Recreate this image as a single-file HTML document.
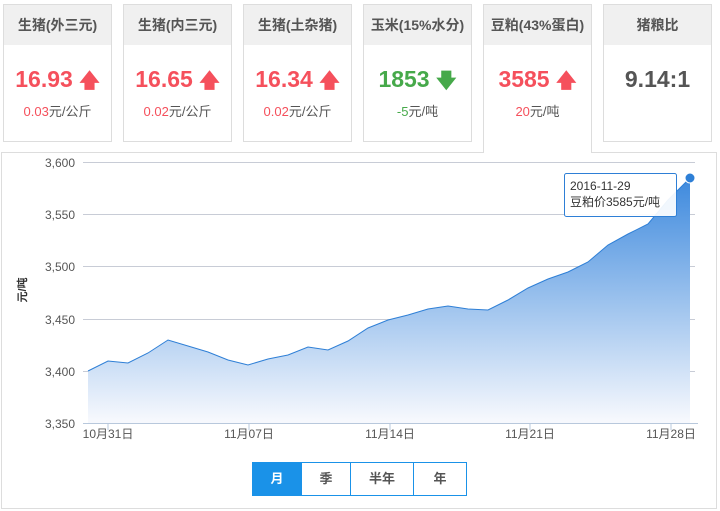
<!DOCTYPE html>
<html><head><meta charset="utf-8"><style>
body{margin:0;width:720px;height:511px;background:#fff;font-family:"Liberation Sans","Noto Sans CJK SC",sans-serif;position:relative;overflow:hidden}
.card{position:absolute;top:4px;width:107px;height:136px;border:1px solid #ddd;background:#fff;text-align:center}
.card .h{height:40px;background:#f0f0f0;line-height:40px;font-size:14px;font-weight:bold;color:#555}
.card .v{margin-top:20px;font-size:23px;font-weight:bold;line-height:28px}
.card .s{margin-top:6px;font-size:13px;color:#555}
.r{color:#f5505c}.g{color:#46a94a}
.panel{position:absolute;left:1px;top:152px;width:714px;height:355px;border:1px solid #ddd}
.btns{position:absolute;left:252px;top:462px;height:32px;width:213px;border:1px solid #1a92e8;display:flex}
.btns div{flex:none;text-align:center;line-height:32px;font-size:13px;font-weight:bold;color:#555;border-right:1px solid #1a92e8}
</style></head><body>
<div class="panel"></div>
<div class="card" style="left:3px"><div class="h">生猪(外三元)</div><div class="v r">16.93 <span style="font-size:20px">&#129093;</span></div><div class="s"><span class="r">0.03</span>元/公斤</div></div>
<div class="card" style="left:123px"><div class="h">生猪(内三元)</div><div class="v r">16.65 <span style="font-size:20px">&#129093;</span></div><div class="s"><span class="r">0.02</span>元/公斤</div></div>
<div class="card" style="left:243px"><div class="h">生猪(土杂猪)</div><div class="v r">16.34 <span style="font-size:20px">&#129093;</span></div><div class="s"><span class="r">0.02</span>元/公斤</div></div>
<div class="card" style="left:363px"><div class="h">玉米(15%水分)</div><div class="v g">1853 <span style="font-size:20px">&#129095;</span></div><div class="s"><span class="g">-5</span>元/吨</div></div>
<div class="card" style="left:483px;height:148px;border-bottom:none"><div class="h">豆粕(43%蛋白)</div><div class="v r">3585 <span style="font-size:20px">&#129093;</span></div><div class="s"><span class="r">20</span>元/吨</div></div>
<div class="card" style="left:603px"><div class="h">猪粮比</div><div class="v" style="color:#555">9.14:1</div></div>
<svg style="position:absolute;left:0;top:0" width="720" height="511">
<defs><linearGradient id="gr" x1="0" y1="0" x2="0" y2="1"><stop offset="0" stop-color="#2e84dc"/><stop offset="1" stop-color="#fff" stop-opacity="0.9"/></linearGradient><linearGradient id="gr2" x1="0" y1="175" x2="0" y2="420" gradientUnits="userSpaceOnUse"><stop offset="0" stop-color="#3b88dd"/><stop offset="1" stop-color="#f6f8fd"/></linearGradient></defs>
<g stroke="#c8ccd6" stroke-width="1">
<line x1="83" y1="162.5" x2="695" y2="162.5"/><line x1="83" y1="214.5" x2="695" y2="214.5"/><line x1="83" y1="266.5" x2="695" y2="266.5"/><line x1="83" y1="319.5" x2="695" y2="319.5"/><line x1="83" y1="371.5" x2="695" y2="371.5"/></g>
<path d="M88,371 L108,361 128,363 148,353 168,340 188,346 208,352 228,360 248,365 268,359 288,355 308,347 328,350 348,341 368,328 388,320 408,315 428,309 448,306 468,309 488,310 508,300 528,288 548,279 568,272 588,262 608,245 628,234 648,224 668,200 690,178 L690,423 L88,423Z" fill="url(#gr2)"/>
<path d="M88,371 L108,361 128,363 148,353 168,340 188,346 208,352 228,360 248,365 268,359 288,355 308,347 328,350 348,341 368,328 388,320 408,315 428,309 448,306 468,309 488,310 508,300 528,288 548,279 568,272 588,262 608,245 628,234 648,224 668,200 690,178" fill="none" stroke="#2e7fd6" stroke-width="1"/>
<line x1="83" y1="423.5" x2="698" y2="423.5" stroke="#b8c8dc"/>
<g stroke="#b8c8dc"><line x1="108" y1="424" x2="108" y2="430"/><line x1="249" y1="424" x2="249" y2="430"/><line x1="390" y1="424" x2="390" y2="430"/><line x1="530" y1="424" x2="530" y2="430"/><line x1="671" y1="424" x2="671" y2="430"/></g>
<circle cx="690" cy="178" r="5" fill="#2e7fd6" stroke="#fff" stroke-width="1"/>
<g font-size="12" fill="#555" text-anchor="end"><text x="75" y="167">3,600</text><text x="75" y="219">3,550</text><text x="75" y="271">3,500</text><text x="75" y="324">3,450</text><text x="75" y="376">3,400</text><text x="75" y="428">3,350</text></g>
<g font-size="12" fill="#555" text-anchor="middle"><text x="108" y="438">10月31日</text><text x="249" y="438">11月07日</text><text x="390" y="438">11月14日</text><text x="530" y="438">11月21日</text><text x="671" y="438">11月28日</text></g>
<text transform="translate(26,290) rotate(-90)" font-size="11" font-weight="bold" fill="#333" text-anchor="middle">元/吨</text>
<rect x="564.5" y="173.5" width="112" height="43" fill="#fff" fill-opacity="0.92" stroke="#2e7fd6" rx="2"/>
<text x="570" y="190" font-size="12" fill="#333">2016-11-29</text>
<text x="570" y="206" font-size="12" fill="#333">豆粕价3585元/吨</text>
</svg>
<div class="btns"><div style="width:48px;background:#1a92e8;color:#fff">月</div><div style="width:48px">季</div><div style="width:62px">半年</div><div style="width:52px;border-right:none">年</div></div>
</body></html>
